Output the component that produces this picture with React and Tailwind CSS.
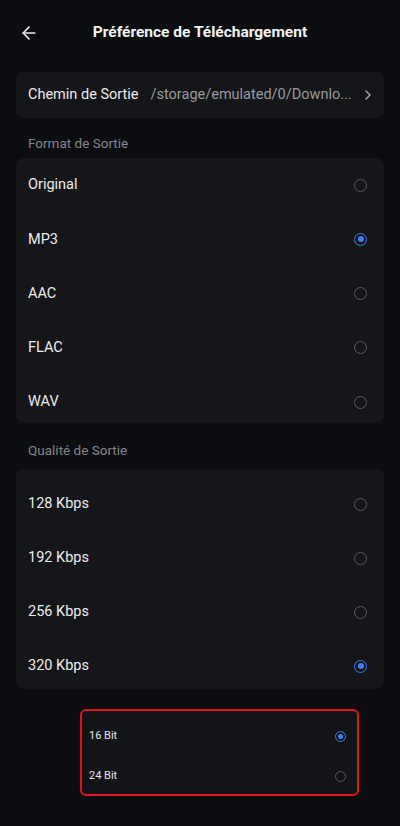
import { ArrowLeft, ChevronRight } from 'lucide-react';

const formats = ['Original', 'MP3', 'AAC', 'FLAC', 'WAV'];
const qualities = ['128 Kbps', '192 Kbps', '256 Kbps', '320 Kbps'];
const depths = ['16 Bit', '24 Bit'];

const Radio = ({ checked, small }) => {
  const size = small ? 'w-[11px] h-[11px]' : 'w-[13px] h-[13px]';
  const dot = small ? 'w-[5px] h-[5px]' : 'w-[6px] h-[6px]';
  if (checked) {
    return (
      <span className={`${size} rounded-full border-[1.5px] border-[#3d7ef5] flex items-center justify-center`}>
        <span className={`${dot} rounded-full bg-[#3d7ef5]`} />
      </span>
    );
  }
  return <span className={`${size} rounded-full border-[1.5px] border-[#5c5d60]`} />;
};

const OptionRow = ({ label, checked, height = 'h-[54.25px]' }) => (
  <div className={`${height} flex items-center justify-between pl-3 pr-[17px]`}>
    <span className="text-[14.5px] text-[#ececec]">{label}</span>
    <Radio checked={checked} />
  </div>
);

export default function App() {
  return (
    <div className="min-h-[826px] bg-[#0b0d10] text-white font-['Roboto',sans-serif] px-4 pb-8">
      {/* Header */}
      <div className="h-[66px] flex items-center relative">
        <ArrowLeft className="w-[20px] h-[20px] text-[#e8e8e8] ml-[3px]" strokeWidth={2} />
        <h1 className="absolute inset-x-0 text-center text-[15.5px] font-bold text-[#f2f2f2]">
          Préférence de Téléchargement
        </h1>
      </div>

      {/* Output path */}
      <div className="mt-[6px] h-[46px] rounded-lg bg-[#151619] flex items-center pl-3 pr-2">
        <span className="text-[14.5px] text-[#ececec] shrink-0">Chemin de Sortie</span>
        <span className="ml-[12px] flex-1 text-[14.5px] text-[#9a9b9e] whitespace-nowrap">/storage/emulated/0/Downlo...</span>
        <ChevronRight className="w-[16px] h-[16px] text-[#b0b0b0] shrink-0" strokeWidth={2} />
      </div>

      {/* Format */}
      <div className="pl-3 pt-[15px] pb-[7px] h-[42px] text-[13.5px] leading-[20px] text-[#85868a]">Format de Sortie</div>
      <div className="rounded-lg bg-[#151619] h-[265px]">
        <div className="-mt-[2px]">
          {formats.map((f) => (
            <OptionRow key={f} label={f} checked={f === 'MP3'} />
          ))}
        </div>
      </div>

      {/* Quality */}
      <div className="pl-3 pt-[17px] pb-[9px] h-[46px] text-[13.5px] leading-[20px] text-[#85868a]">Qualité de Sortie</div>
      <div className="rounded-lg bg-[#151619] h-[220px] pt-[8px]">
        {qualities.map((q) => (
          <OptionRow key={q} label={q} checked={q === '320 Kbps'} height="h-[54px]" />
        ))}
      </div>

      {/* Bit depth */}
      <div className="mt-[20px] ml-[64px] mr-[25px] h-[87px] rounded-md border-2 border-[#e0141b] bg-[#131417] pt-[5px]">
        {depths.map((d, i) => (
          <div key={d} className="h-[40px] flex items-center justify-between pl-[7px] pr-[11px]">
            <span className="text-[11px] text-[#e6e6e6]">{d}</span>
            <Radio checked={i === 0} small />
          </div>
        ))}
      </div>
    </div>
  );
}
